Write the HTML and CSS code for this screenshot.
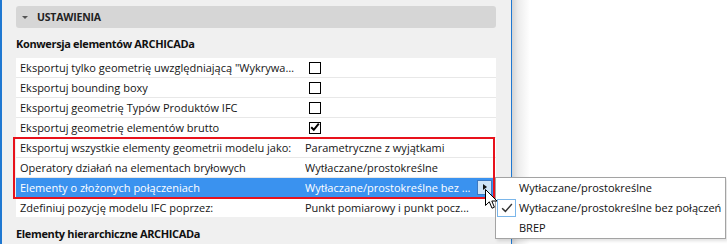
FILE: index.html
```html
<!DOCTYPE html>
<html lang="pl">
<head>
<meta charset="UTF-8">
<meta name="viewport" content="width=device-width, initial-scale=1.0">
<title>Ustawienia IFC</title>
<link rel="stylesheet" href="styles.css">
</head>
<body>

<div class="window">
    <div class="edge"></div>

    <div class="panel">
        <div class="section-head"><span class="caret"></span>USTAWIENIA</div>

        <div class="group-title">Konwersja elementów ARCHICADa</div>

        <div class="table">
            <div class="row">
                <div class="label">Eksportuj tylko geometrię uwzględniającą "Wykrywanie kolizji"</div>
                <div class="value"><span class="check"></span></div>
            </div>
            <div class="row">
                <div class="label">Eksportuj bounding boxy</div>
                <div class="value"><span class="check"></span></div>
            </div>
            <div class="row">
                <div class="label">Eksportuj geometrię Typów Produktów IFC</div>
                <div class="value"><span class="check"></span></div>
            </div>
            <div class="row">
                <div class="label">Eksportuj geometrię elementów brutto</div>
                <div class="value">
                    <span class="check checked">
                        <svg viewBox="0 0 12 12" width="12" height="12"><path d="M2.2 6.2 L4.8 8.8 L9.8 2.6" fill="none" stroke="#000" stroke-width="2"/></svg>
                    </span>
                </div>
            </div>
            <div class="row">
                <div class="label">Eksportuj wszystkie elementy geometrii modelu jako:</div>
                <div class="value"><span class="value-text">Parametryczne z wyjątkami</span></div>
            </div>
            <div class="row">
                <div class="label">Operatory działań na elementach bryłowych</div>
                <div class="value"><span class="value-text">Wytłaczane/prostokreślne</span></div>
            </div>
            <div class="row selected">
                <div class="label">Elementy o złożonych połączeniach</div>
                <div class="value">
                    <span class="value-text" title="Wytłaczane/prostokreślne bez połączeń">Wytłaczane/prostokreślne bez ...</span>
                    <span class="drop-btn"></span>
                </div>
            </div>
            <div class="row">
                <div class="label">Zdefiniuj pozycję modelu IFC poprzez:</div>
                <div class="value"><span class="value-text" title="Punkt pomiarowy i punkt początkowy projektu">Punkt pomiarowy i punkt pocz...</span></div>
            </div>

            <!-- czerwona ramka wokół trzech wierszy -->
            <div class="mark-box"></div>
        </div>

        <div class="group-title second">Elementy hierarchiczne ARCHICADa</div>
    </div>

    <div class="divider"></div>
    <div class="side"></div>
</div>

<!-- rozwinięta lista -->
<div class="popup">
    <div class="item">Wytłaczane/prostokreślne</div>
    <div class="item current">
        <span class="tick">
            <svg viewBox="0 0 18 18" width="16" height="16"><path d="M3.5 9.2 L7.2 12.8 L14.5 4.6" fill="none" stroke="#333" stroke-width="1.6"/></svg>
        </span>
        Wytłaczane/prostokreślne bez połączeń
    </div>
    <div class="item">BREP</div>
</div>

<svg class="cursor" viewBox="0 0 13 21" width="13" height="21">
    <path d="M0.5 0.5 V16.5 L4.3 12.8 L7 19.2 L9.4 18.2 L6.8 12 H12 Z" fill="#fff" stroke="#000" stroke-width="1" stroke-linejoin="miter"/>
</svg>

</body>
</html>
```

FILE: styles.css
```css
body {
    font-family: "Open Sans", "Liberation Sans", sans-serif;
    font-size: 11px;
    color: #151515;
    margin: 0;
    padding: 0;
    background-color: #fff;
    overflow: hidden;
}
.window {
    display: flex;
    height: 244px;
}
.edge {
    width: 2px;
    background-color: #1f78d1;
}
.panel {
    position: relative;
    width: 480px;
    padding: 6px 15px 0 14px;
    background-color: #f0f0f0;
}
.divider {
    width: 1px;
    background-color: #1f78d1;
}
.side {
    flex: 1;
    background: linear-gradient(to right, #d4d4d4 0, #ececec 6px, #fff 18px);
}

/* naglowek sekcji */
.section-head {
    display: flex;
    align-items: center;
    height: 22px;
    padding-left: 6px;
    background-color: #d6d6d6;
    border-radius: 3px;
    font-size: 10.5px;
    font-weight: bold;
    letter-spacing: -0.2px;
    color: #222;
}
.caret {
    width: 0;
    height: 0;
    border-left: 3px solid transparent;
    border-right: 3px solid transparent;
    border-top: 3px solid #555;
    margin: 0 9px 0 0;
}
.group-title {
    font-weight: bold;
    letter-spacing: -0.35px;
    line-height: 16px;
    margin: 8px 0 6px 0;
    color: #111;
}
.group-title.second {
    margin-top: 9px;
}

/* tabela ustawien */
.table {
    position: relative;
    display: flex;
    flex-direction: column;
    gap: 1px;
    background-color: #e8e8e8;
}
.row {
    display: grid;
    grid-template-columns: 289px 1fr;
    height: 19px;
    line-height: 19px;
    background-color: #fff;
}
.row.selected {
    background-color: #3a92ef;
    color: #fff;
}
.label {
    padding: 0 8px 0 4px;
    white-space: nowrap;
    overflow: hidden;
    text-overflow: ellipsis;
}
.value {
    display: flex;
    align-items: center;
    padding-right: 4px;
}
.value-text {
    flex: 1;
    min-width: 0;
    margin-right: 6px;
    white-space: nowrap;
    overflow: hidden;
    text-overflow: ellipsis;
}
.check {
    display: block;
    box-sizing: border-box;
    width: 12px;
    height: 12px;
    margin-left: 4px;
    border: 1.5px solid #000;
    background-color: #fff;
}
.check svg {
    display: block;
    margin: -1.5px 0 0 -1.5px;
}
.drop-btn {
    position: relative;
    flex: none;
    box-sizing: border-box;
    width: 15px;
    height: 15px;
    background-color: #cfe4f8;
    border: 1px solid #3b78c2;
}
.drop-btn::after {
    content: "";
    position: absolute;
    left: 5px;
    top: 3px;
    border-top: 3.5px solid transparent;
    border-bottom: 3.5px solid transparent;
    border-left: 4px solid #111;
}
.mark-box {
    position: absolute;
    left: -3px;
    top: 79px;
    width: 482px;
    height: 62px;
    box-sizing: border-box;
    border: 2px solid #e8121c;
}

/* lista rozwijana */
.popup {
    position: absolute;
    left: 495px;
    top: 177px;
    width: 229px;
    padding: 0;
    border: 1px solid #a3a3a3;
    background-color: #fff;
    box-shadow: 2px 2px 3px rgba(0, 0, 0, 0.12);
}
.item {
    position: relative;
    height: 20px;
    line-height: 20px;
    padding-left: 23px;
    white-space: nowrap;
    color: #111;
}
.tick {
    position: absolute;
    left: 1px;
    top: 1px;
    box-sizing: border-box;
    width: 19px;
    height: 18px;
    border: 1px solid #7ab6ea;
    display: flex;
    align-items: center;
    justify-content: center;
}
.cursor {
    position: absolute;
    left: 485px;
    top: 189px;
}
```
